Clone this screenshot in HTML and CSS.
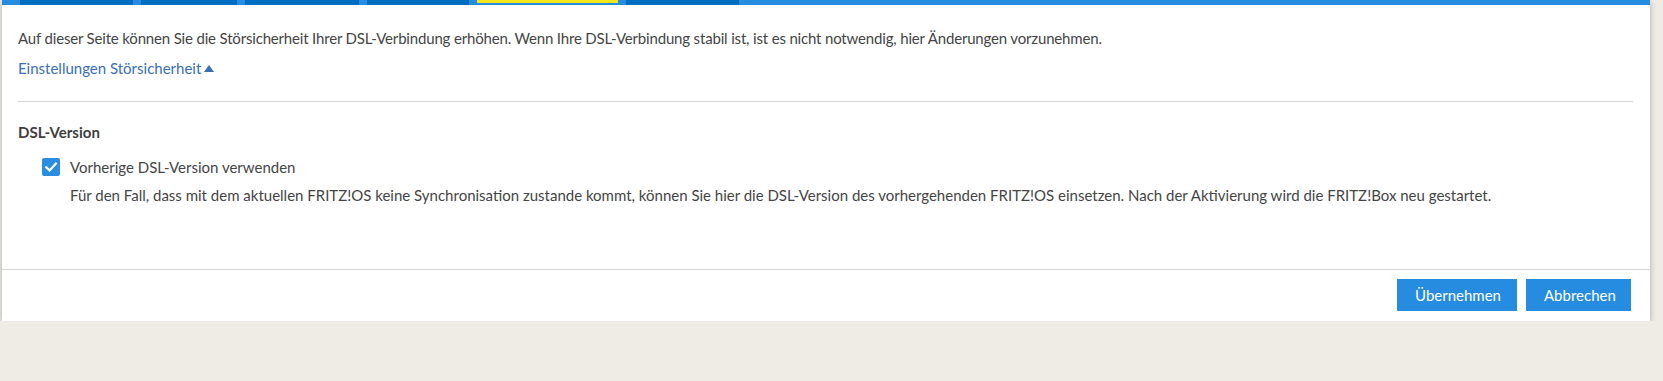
FILE: index.html
```html
<!DOCTYPE html>
<html lang="de">
<head>
    <meta charset="UTF-8">
    <meta name="viewport" content="width=device-width, initial-scale=1.0">
    <title>Störsicherheit</title>
    <link rel="stylesheet" href="styles.css">
</head>
<body>

    <div class="panel">
        <div class="tabs">
            <span class="tab"></span>
            <span class="tab"></span>
            <span class="tab"></span>
            <span class="tab"></span>
            <span class="tab active"></span>
            <span class="tab"></span>
        </div>

        <div class="content">
            <p class="intro">Auf dieser Seite können Sie die Störsicherheit Ihrer DSL-Verbindung erhöhen. Wenn Ihre DSL-Verbindung stabil ist, ist es nicht notwendig, hier Änderungen vorzunehmen.</p>
            <a class="toggle" href="#">Einstellungen Störsicherheit<span class="arrow"></span></a>

            <hr>

            <h4>DSL-Version</h4>
            <div class="option">
                <label class="check">
                    <input type="checkbox" checked>
                    <span class="box">
                        <svg width="18" height="18" viewBox="0 0 18 18"><path d="M4.2 9.2 L7.6 12.4 L13.9 5.6" fill="none" stroke="#fff" stroke-width="2.2" stroke-linecap="square"/></svg>
                    </span>
                    Vorherige DSL-Version verwenden
                </label>
                <p class="hint">Für den Fall, dass mit dem aktuellen FRITZ!OS keine Synchronisation zustande kommt, können Sie hier die DSL-Version des vorhergehenden FRITZ!OS einsetzen. Nach der Aktivierung wird die FRITZ!Box neu gestartet.</p>
            </div>
        </div>

        <div class="footer">
            <button class="btn">Übernehmen</button>
            <button class="btn">Abbrechen</button>
        </div>
    </div>

</body>
</html>
```

FILE: styles.css
```css
body {
    margin: 0;
    background-color: #efece6; /* beige page background */
    font-family: Lato, "Open Sans", sans-serif;
    font-size: 15px;
    color: #454545;
}
.panel {
    margin-left: 2px;
    width: 1648px;
    background-color: #fff;
    box-shadow: 0 2px 6px rgba(0, 0, 0, 0.28);
}

/* Tab strip */
.tabs {
    display: flex;
    gap: 8px;
    height: 5px;
    padding-left: 18px;
    background-color: #268ce0;
}
.tab {
    background-color: #006ec0;
}
.tab:nth-child(1) { width: 113px; }
.tab:nth-child(2) { width: 96px; }
.tab:nth-child(3) { width: 114px; }
.tab:nth-child(4) { width: 102px; }
.tab:nth-child(5) { width: 141px; }
.tab:nth-child(6) { width: 113px; }
.tab.active {
    background-color: transparent;
    border-top: 3px solid #f5e61c;
    height: 2px;
}

/* Content */
.content {
    padding: 23px 17px 64px 16px;
}
.intro {
    margin: 0;
    line-height: 20px;
    letter-spacing: -0.17px;
}
.toggle {
    display: inline-block;
    margin-top: 10px;
    line-height: 20px;
    color: #3a6fb5;
    text-decoration: none;
}
.arrow {
    display: inline-block;
    margin-left: 3px;
    border-left: 5px solid transparent;
    border-right: 5px solid transparent;
    border-bottom: 7px solid #3a6fb5;
    vertical-align: 2px;
}
hr {
    margin: 23px 0 0;
    border: none;
    border-top: 1px solid #d6d6d6;
}
h4 {
    margin: 20px 0 0;
    font-size: 15px;
    line-height: 20px;
    font-weight: bold;
    color: #3f3f3f;
}
.option {
    margin-top: 15px;
    padding-left: 24px;
}
.check {
    display: flex;
    align-items: center;
    gap: 10px;
    line-height: 20px;
    cursor: pointer;
}
.check input {
    display: none;
}
.box {
    width: 18px;
    height: 18px;
    border-radius: 2px;
    background-color: #2a8de0;
}
.box svg {
    display: block;
}
.hint {
    margin: 8px 0 0 28px;
    line-height: 20px;
}

/* Footer buttons */
.footer {
    display: flex;
    justify-content: flex-end;
    gap: 9px;
    padding: 9px 19px 10px;
    border-top: 1px solid #d6d6d6;
}
.btn {
    height: 32px;
    padding: 0 18px;
    border: none;
    background-color: #268ce0;
    color: #fff;
    font-family: inherit;
    font-size: 15px;
    cursor: pointer;
}
.btn:first-child { width: 120px; }
.btn:last-child { width: 105px; }
```
